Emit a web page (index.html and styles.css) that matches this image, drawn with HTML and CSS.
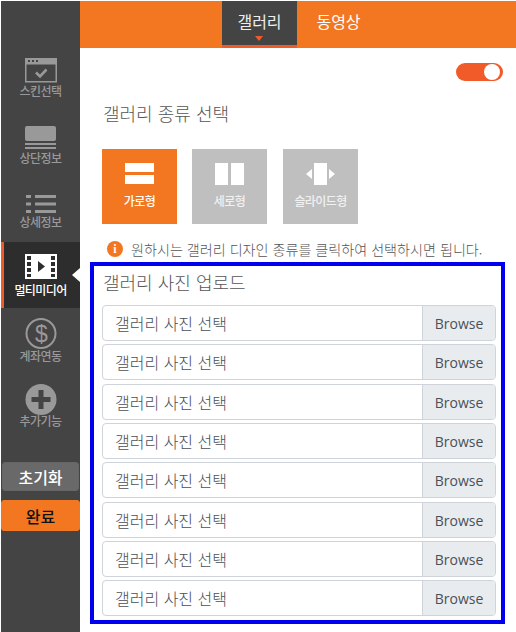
FILE: index.html
```html
<!DOCTYPE html>
<html lang="ko">
<head>
<meta charset="utf-8">
<title>갤러리</title>
<link rel="stylesheet" href="styles.css">
</head>
<body>
<div class="app">
  <aside class="sidebar">
    <div class="nav-item skin">
      <svg class="nav-icon" width="32" height="25" viewBox="0 0 32 25"><path fill="#999" fill-rule="evenodd" d="M0 0h32v24.500H0zM1.500 6.500v16.500h29V6.500z"/><path fill="#444" d="M3 2h2v2H3zM7 2h2v2H7zM11 2h2v2h-2z"/><path fill="none" stroke="#999" stroke-width="2.600" d="M11 14.500l4 4 6.500-7"/></svg>
      <span>스킨선택</span>
    </div>
    <div class="nav-item head">
      <svg class="nav-icon" width="32" height="23" viewBox="0 0 32 23"><rect width="31" height="15" rx="2" fill="#999"/><path fill="#999" d="M0 17h31v2H0zM0 21h31v2H0z"/></svg>
      <span>상단정보</span>
    </div>
    <div class="nav-item detail">
      <svg class="nav-icon" width="32" height="18" viewBox="0 0 32 18"><path fill="#999" d="M1 0h5v3H1zM10 0h21v3H10zM1 7.500h5v3H1zM10 7.500h21v3H10zM1 15h5v3H1zM10 15h21v3H10z"/></svg>
      <span>상세정보</span>
    </div>
    <div class="nav-item active">
      <svg class="nav-icon" width="32" height="25" viewBox="0 0 32 25"><path fill="#fff" fill-rule="evenodd" d="M0 0h32v25H0zM2 2v4h4V2zM2 8v4h4V8zM2 14v4h4v-4zM2 20v3h4v-3zM26 2v4h4V2zM26 8v4h4V8zM26 14v4h4v-4zM26 20v3h4v-3z"/><path fill="#2d2d2d" d="M13 7l7 5.500-7 5.500z"/></svg>
      <span>멀티미디어</span>
      <i class="nav-arrow"></i>
    </div>
    <div class="nav-item account">
      <svg class="nav-icon" width="32" height="31" viewBox="0 0 32 31"><circle cx="16" cy="15.500" r="14.500" fill="none" stroke="#999" stroke-width="2"/><text x="16" y="23.500" text-anchor="middle" class="dollar">$</text></svg>
      <span>계좌연동</span>
    </div>
    <div class="nav-item extra">
      <svg class="nav-icon" width="32" height="31" viewBox="0 0 32 31"><circle cx="16" cy="15.500" r="15.500" fill="#999"/><path fill="#444" d="M13.500 6h5v7h7v5h-7v7h-5v-7h-7v-5h7z"/></svg>
      <span>추가기능</span>
    </div>
    <div class="side-actions">
      <button class="side-btn reset" type="button">초기화</button>
      <button class="side-btn done" type="button">완료</button>
    </div>
  </aside>
  <main class="main">
    <header class="tabs">
      <a class="tab current">갤러리<i class="tab-caret"></i></a>
      <a class="tab video">동영상</a>
    </header>
    <div class="toggle-row"><span class="toggle"><i></i></span></div>
    <h2 class="section-title">갤러리 종류 선택</h2>
    <div class="types">
      <div class="type selected">
        <svg width="30" height="22" viewBox="0 0 30 22"><path fill="#fff" d="M0 0h29v9H0zM0 12h29v9H0z"/></svg>
        <span>가로형</span>
      </div>
      <div class="type">
        <svg width="30" height="22" viewBox="0 0 30 22"><path fill="#fff" d="M0 0h13v22H0zM16 0h13v22H16z"/></svg>
        <span>세로형</span>
      </div>
      <div class="type slide">
        <svg width="30" height="22" viewBox="0 0 30 22"><path fill="#fff" d="M8 0h13v22H8zM6 6v10l-6-5zM23 6v10l6-5z"/></svg>
        <span>슬라이드형</span>
      </div>
    </div>
    <p class="hint"><span class="info">i</span>원하시는 갤러리 디자인 종류를 클릭하여 선택하시면 됩니다.</p>
    <section class="upload">
      <h3 class="upload-title">갤러리 사진 업로드</h3>
      <div class="file-list">
        <div class="file"><span class="file-name">갤러리 사진 선택</span><span class="browse">Browse</span></div>
        <div class="file"><span class="file-name">갤러리 사진 선택</span><span class="browse">Browse</span></div>
        <div class="file"><span class="file-name">갤러리 사진 선택</span><span class="browse">Browse</span></div>
        <div class="file"><span class="file-name">갤러리 사진 선택</span><span class="browse">Browse</span></div>
        <div class="file"><span class="file-name">갤러리 사진 선택</span><span class="browse">Browse</span></div>
        <div class="file"><span class="file-name">갤러리 사진 선택</span><span class="browse">Browse</span></div>
        <div class="file"><span class="file-name">갤러리 사진 선택</span><span class="browse">Browse</span></div>
        <div class="file"><span class="file-name">갤러리 사진 선택</span><span class="browse">Browse</span></div>
      </div>
    </section>
  </main>
</div>
</body>
</html>
```
FILE: styles.css
```css
* { box-sizing: border-box; }
html, body { margin: 0; padding: 0; background: #fff; }
body {
  width: 516px;
  height: 632px;
  overflow: hidden;
  padding: 1px 0 0 1px;
  font-family: "Noto Sans CJK KR", "Noto Sans", sans-serif;
}
.app { display: flex; height: 631px; }
.sidebar {
  width: 79px;
  flex: none;
  background: #444;
  display: flex;
  flex-direction: column;
  padding-top: 57px;
}
.nav-item {
  position: relative;
  display: flex;
  flex-direction: column;
  align-items: center;
  color: #999;
  font-size: 12px;
  font-weight: 500;
  letter-spacing: -0.6px;
  line-height: 14px;
}
.nav-icon { display: block; flex: none; }
.skin { height: 68px; }
.skin span { margin-top: 1px; }
.head { height: 69px; }
.head span { margin-top: 2px; }
.detail { height: 47px; }
.detail span { margin-top: 2px; }
.nav-item.active {
  height: 66px;
  background: #2d2d2d;
  color: #fff;
  padding-top: 12px;
  box-shadow: inset 3px 0 0 #f15a29;
}
.active span { margin-top: 4px; }
.account { height: 76px; padding-top: 10px; }
.account span { margin-top: 0; }
.extra { height: 78px; }
.extra span { margin-top: -1px; }
.nav-arrow {
  position: absolute;
  right: 0;
  top: 26px;
  border-style: solid;
  border-width: 7px 8px 7px 0;
  border-color: transparent #fff transparent transparent;
}
.dollar { font-family: "Liberation Sans", sans-serif; font-size: 23px; fill: #999; }
.side-actions {
  display: flex;
  flex-direction: column;
  gap: 9px;
  align-items: center;
}
.side-btn {
  display: block;
  height: 29px;
  border-radius: 3px;
  padding: 0;
  font: 500 16px/1 "Noto Sans CJK KR", sans-serif;
}
.reset { width: 77px; background: #696969; border: 1px solid #666; color: #fff; }
.done { width: 79px; height: 31px; background: #f37721; border: 1px solid #f37721; color: #111; }
.main { flex: 1; min-width: 0; display: flex; flex-direction: column; }
.tabs {
  height: 47px;
  background: #f37721;
  display: flex;
  padding-left: 142px;
  flex: none;
}
.tab {
  width: 75px;
  color: #fff;
  font-size: 16px;
  text-align: center;
  line-height: 40px;
  position: relative;
}
.tab.current {
  background: #444;
  border-bottom: 3px solid #f15a29;
  color: #eee;
}
.video { margin-left: 4px; }
.tab-caret {
  position: absolute;
  left: 33px;
  bottom: 4px;
  border-style: solid;
  border-width: 5px 4.500px 0;
  border-color: #f15a29 transparent transparent;
}
.toggle-row { display: flex; justify-content: flex-end; padding: 15px 13px 0 0; flex: none; }
.toggle {
  width: 47px;
  height: 18px;
  border-radius: 9px;
  background: #f15a29;
  display: flex;
  justify-content: flex-end;
  align-items: center;
  padding-right: 3px;
}
.toggle i { width: 16px; height: 16px; border-radius: 50%; background: #fff; }
.section-title {
  margin: 19px 0 0 23px;
  font-size: 18px;
  font-weight: 300;
  line-height: 26px;
  color: #555;
}
.types { display: flex; gap: 15px; margin: 23px 0 0 22px; flex: none; }
.type {
  width: 75px;
  height: 75px;
  background: #bfbfbf;
  color: #f1f1f1;
  display: flex;
  flex-direction: column;
  align-items: center;
  padding-top: 14px;
  font-size: 12px;
  font-weight: 500;
  letter-spacing: -0.6px;
}
.type.selected { background: #f37721; color: #fff; }
.type.slide { margin-left: 1px; }
.type span { margin-top: 8px; line-height: 16px; }
.hint {
  margin: 13px 0 0 27px;
  display: flex;
  align-items: center;
  gap: 8px;
  height: 24px;
  font-size: 14.100px;
  font-weight: 300;
  color: #555;
  white-space: nowrap;
  flex: none;
}
.info {
  width: 16px;
  height: 16px;
  border-radius: 50%;
  background: #f37721;
  color: #fff;
  font: 700 12px/16px "Liberation Serif", serif;
  text-align: center;
  flex: none;
}
.upload {
  width: 415px;
  height: 362px;
  margin: 1px 0 0 10px;
  border: 4px solid #0000ee;
  padding: 3px 5px 0 8px;
  flex: none;
}
.upload-title {
  margin: 0 0 0 1px;
  font-size: 18px;
  font-weight: 300;
  line-height: 26px;
  color: #555;
}
.file-list { display: flex; flex-direction: column; gap: 3.330px; margin-top: 10px; }
.file {
  display: flex;
  height: 36px;
  border: 1px solid #ced4da;
  border-radius: 4px;
  overflow: hidden;
  font-size: 16px;
}
.file-name { flex: 1; padding-left: 12px; line-height: 34px; color: #495057; font-weight: 300; }
.browse {
  width: 73px;
  background: #e9ecef;
  border-left: 1px solid #ced4da;
  text-align: center;
  color: #495057;
  line-height: 36px;
  font-family: "Open Sans", sans-serif;
  font-size: 14px;
}
```
